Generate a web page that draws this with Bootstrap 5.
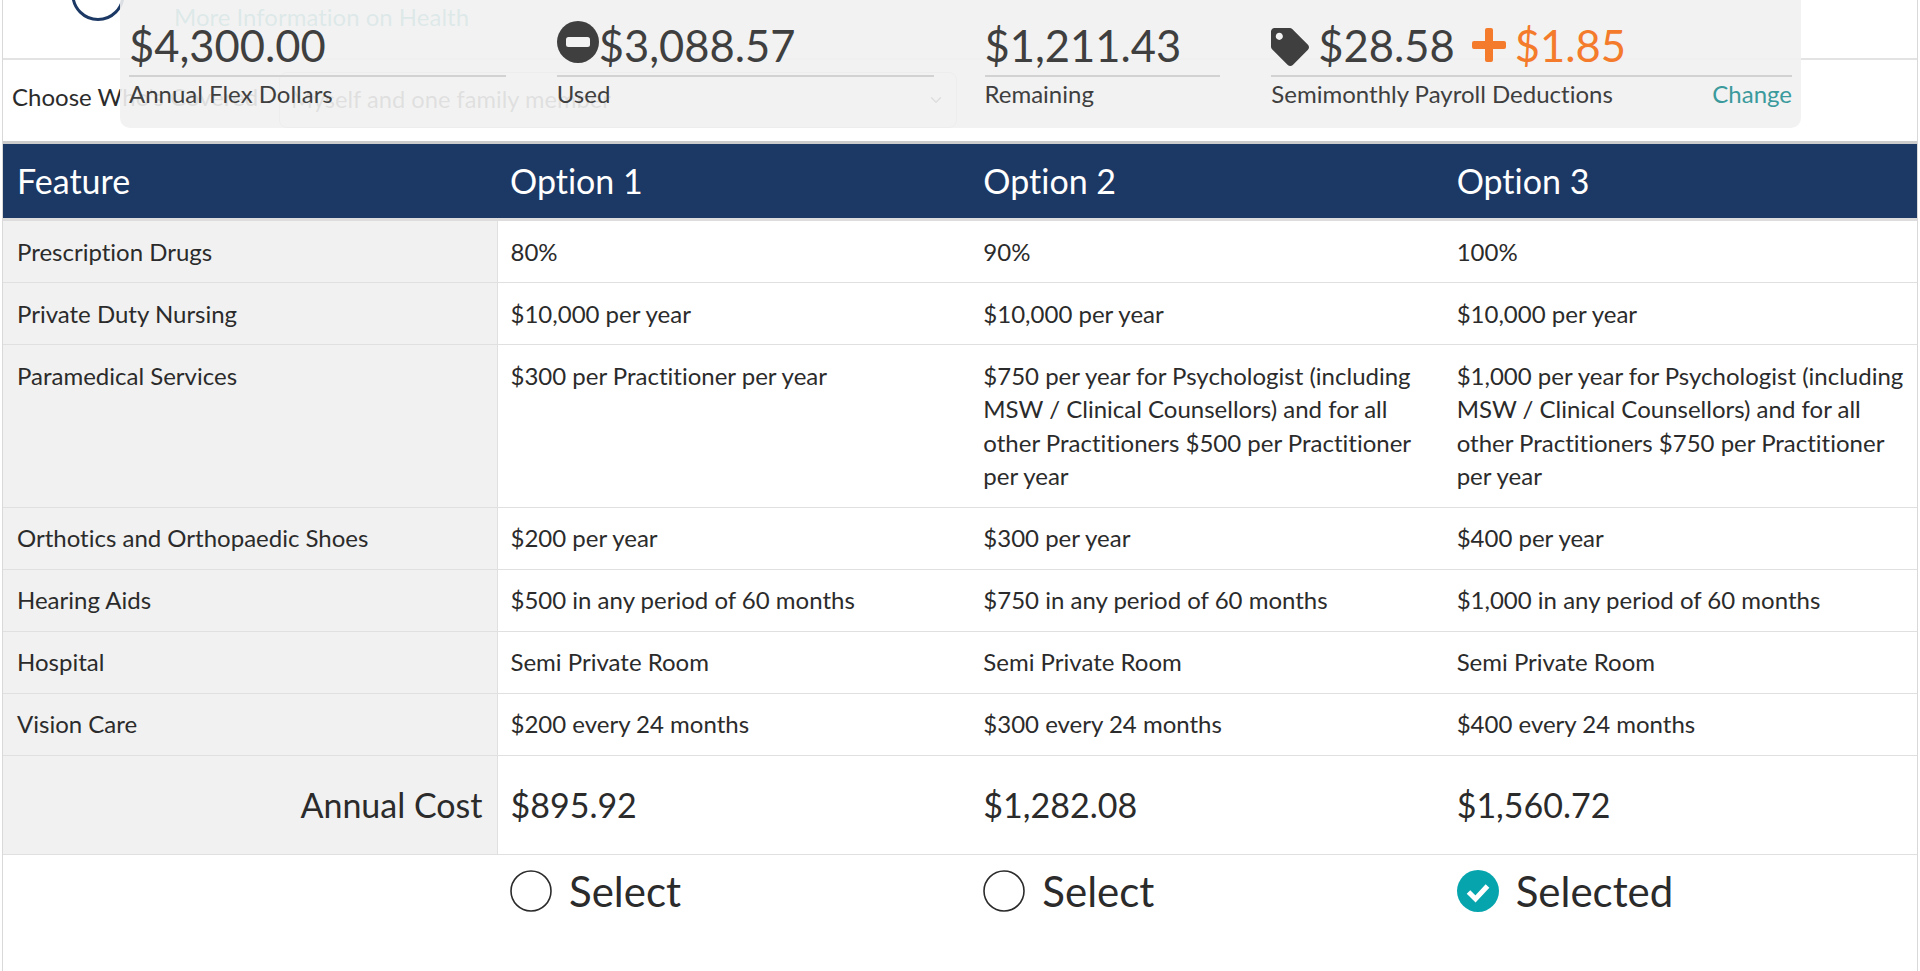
<!DOCTYPE html>
<html lang="en">
<head>
<meta charset="utf-8">
<title>Benefits</title>
<link href="https://cdn.jsdelivr.net/npm/bootstrap@5.3.0/dist/css/bootstrap.min.css" rel="stylesheet">
<style>
html,body{height:100%;overflow:hidden}
body{font-family:"Lato","Liberation Sans",sans-serif;font-variant-ligatures:none;color:#2b2b2b;background:#fff;position:relative}
.page-frame{margin:0 2px;border-left:1px solid #d9d9d9;border-right:1px solid #d9d9d9;min-height:971px}
.top-strip{height:60px;border-bottom:2px solid #e3e3e3;padding-left:69px}
.ring{display:block;width:60px;height:22px;flex:none}
.more-link{font-size:24px;line-height:32px;color:#2b9a9a;margin-left:42px;padding-top:1px}
.cover-row{height:81px;padding:12px 0 0 9px;font-size:24px}
.cover-label{width:267px;flex:none;margin-top:-1px}
.cover-select{width:678px;height:56px;font-size:23.7px;color:#444;font-family:inherit;border:1px solid #c8c8c8;border-radius:8px;padding:8px 40px 8px 11px}
.plan-table{table-layout:fixed;width:100%;margin:0;border-collapse:collapse;font-size:24px;color:#2b2b2b}
.plan-table col.c-feature{width:494px}
.plan-table td,.plan-table th{padding:13.7px 13px;line-height:33.6px;border:0;border-bottom:1px solid #e0e0e0;vertical-align:top;font-weight:400}
.plan-table td:first-child{padding-left:14px}
.plan-table thead th{background:#1c3864;color:#fff;font-size:34px;padding:15px 13px;line-height:44px;border-top:3px solid #ccc;border-bottom:3px solid #ddd}
.plan-table thead th:first-child{padding-left:14px}
.plan-table td.feat{background:#f1f1f1;border-right:1px solid #e0e0e0}
.plan-table .cost-row td{font-size:34px;line-height:47.6px;padding-top:25.5px;padding-bottom:25.5px}
.plan-table .cost-row td.feat{text-align:right;padding-right:14px}
.plan-table .pick-row td{border:0;font-size:42px;line-height:48px;padding-top:12px;padding-bottom:10px}
.pick{color:#2b2b2b;display:flex;align-items:center;gap:17px}
.pick svg{width:42px;height:42px;flex:none}
.flex-panel{position:absolute;left:120px;top:-10px;width:1681px;height:138px;background:rgba(241,241,241,.9);border-radius:10px;padding:0 9px;color:#3f3f3f;gap:51px}
.stat{display:flex;flex-direction:column}
.stat-a{width:377px}
.stat-c{width:236px}
.stat-d{width:521px}
.stat-num{height:87px;display:flex;align-items:flex-end;font-size:43.5px;line-height:60px;border-bottom:2px solid #d2d2d2;padding-bottom:0}
.stat-lbl{font-size:24px;line-height:28px;padding-top:3px;display:flex;justify-content:space-between}
.stat-lbl a{color:#3a9a9c;text-decoration:none}
.ico{flex:none;align-self:flex-end}
.ico-minus{margin-bottom:12px}
.ico-tag{margin:0 9px 9px 0}
.ico-plus{margin:0 8px 12px 16px}
.orange{color:#f47b2b}
</style>
</head>
<body>
<div class="page-frame">
  <div class="top-strip d-flex align-items-start">
    <svg class="ring" viewBox="0 0 60 22"><circle cx="26" cy="-5.6" r="25.1" fill="none" stroke="#1c3864" stroke-width="3"/></svg>
    <div class="more-link">More Information on Health</div>
  </div>
  <div class="cover-row d-flex align-items-start">
    <div class="cover-label pt-2">Choose Who's Covered</div>
    <select class="form-select cover-select"><option>Myself and one family member</option></select>
  </div>
  <table class="table plan-table">
    <colgroup><col class="c-feature"><col><col><col></colgroup>
    <thead>
      <tr><th>Feature</th><th>Option 1</th><th>Option 2</th><th>Option 3</th></tr>
    </thead>
    <tbody>
      <tr><td class="feat">Prescription Drugs</td><td>80%</td><td>90%</td><td>100%</td></tr>
      <tr><td class="feat">Private Duty Nursing</td><td>$10,000 per year</td><td>$10,000 per year</td><td>$10,000 per year</td></tr>
      <tr><td class="feat">Paramedical Services</td><td>$300 per Practitioner per year</td><td>$750 per year for Psychologist (including MSW / Clinical Counsellors) and for all other Practitioners $500 per Practitioner per year</td><td>$1,000 per year for Psychologist (including MSW / Clinical Counsellors) and for all other Practitioners $750 per Practitioner per year</td></tr>
      <tr><td class="feat">Orthotics and Orthopaedic Shoes</td><td>$200 per year</td><td>$300 per year</td><td>$400 per year</td></tr>
      <tr><td class="feat">Hearing Aids</td><td>$500 in any period of 60 months</td><td>$750 in any period of 60 months</td><td>$1,000 in any period of 60 months</td></tr>
      <tr><td class="feat">Hospital</td><td>Semi Private Room</td><td>Semi Private Room</td><td>Semi Private Room</td></tr>
      <tr><td class="feat">Vision Care</td><td>$200 every 24 months</td><td>$300 every 24 months</td><td>$400 every 24 months</td></tr>
      <tr class="cost-row"><td class="feat">Annual Cost</td><td>$895.92</td><td>$1,282.08</td><td>$1,560.72</td></tr>
      <tr class="pick-row"><td></td>
        <td><div class="pick"><svg viewBox="0 0 42 42"><circle cx="21" cy="21" r="20" fill="#fff" stroke="#2b2b2b" stroke-width="1.6"/></svg>Select</div></td>
        <td><div class="pick"><svg viewBox="0 0 42 42"><circle cx="21" cy="21" r="20" fill="#fff" stroke="#2b2b2b" stroke-width="1.6"/></svg>Select</div></td>
        <td><div class="pick"><svg viewBox="0 0 42 42"><circle cx="21" cy="21" r="21" fill="#06a5ae"/><path d="M11.5 22l7 7 12-13" fill="none" stroke="#fff" stroke-width="5"/></svg>Selected</div></td>
      </tr>
    </tbody>
  </table>
</div>
<div class="flex-panel d-flex">
  <div class="stat stat-a">
    <div class="stat-num">$4,300.00</div>
    <div class="stat-lbl"><span>Annual Flex Dollars</span></div>
  </div>
  <div class="stat stat-a">
    <div class="stat-num"><svg class="ico ico-minus" width="42" height="42" viewBox="0 0 42 42"><circle cx="21" cy="21" r="21" fill="#3f3f3f"/><rect x="9" y="16" width="24" height="10" rx="2.5" fill="#f3f3f3"/></svg>$3,088.57</div>
    <div class="stat-lbl"><span>Used</span></div>
  </div>
  <div class="stat stat-c">
    <div class="stat-num">$1,211.43</div>
    <div class="stat-lbl"><span>Remaining</span></div>
  </div>
  <div class="stat stat-d">
    <div class="stat-num"><svg class="ico ico-tag" width="38" height="38" viewBox="0 0 512 512"><path fill="#3f3f3f" d="M0 252.118V48C0 21.49 21.49 0 48 0h204.118a48 48 0 0 1 33.941 14.059l211.882 211.882c18.745 18.745 18.745 49.137 0 67.882L293.823 497.941c-18.745 18.745-49.137 18.745-67.882 0L14.059 286.059A48 48 0 0 1 0 252.118zM112 64c-26.51 0-48 21.49-48 48s21.49 48 48 48 48-21.49 48-48-21.49-48-48-48z"/></svg>$28.58<svg class="ico ico-plus" width="36" height="36" viewBox="0 0 36 36"><path fill="#f47b2b" d="M14 3a2 2 0 0 1 2-2h4a2 2 0 0 1 2 2v11h11a2 2 0 0 1 2 2v4a2 2 0 0 1-2 2H22v11a2 2 0 0 1-2 2h-4a2 2 0 0 1-2-2V22H3a2 2 0 0 1-2-2v-4a2 2 0 0 1 2-2h11z"/></svg><span class="orange">$1.85</span></div>
    <div class="stat-lbl"><span>Semimonthly Payroll Deductions</span><a href="#">Change</a></div>
  </div>
</div>
<script src="https://cdn.jsdelivr.net/npm/bootstrap@5.3.0/dist/js/bootstrap.bundle.min.js"></script>
</body>
</html>
